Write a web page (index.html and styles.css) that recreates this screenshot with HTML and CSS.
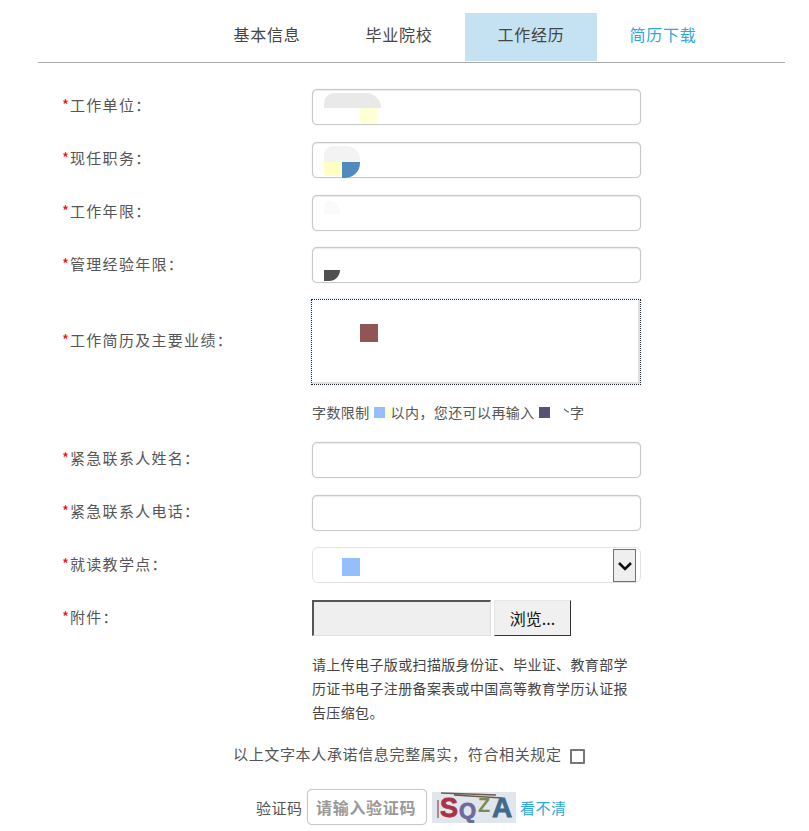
FILE: index.html
```html
<!DOCTYPE html>
<html lang="zh">
<head>
<meta charset="utf-8">
<title>工作经历</title>
<link rel="stylesheet" href="styles.css">
</head>
<body>
<nav class="tabs">
  <a class="tab">基本信息</a>
  <a class="tab">毕业院校</a>
  <a class="tab active">工作经历</a>
  <a class="tab link">简历下载</a>
</nav>
<form class="form">
  <div class="row">
    <label class="label"><i>*</i>工作单位：</label>
    <div class="field">
      <input class="input" type="text">
      <span class="mask m-a1"></span><span class="mask m-a2"></span>
    </div>
  </div>
  <div class="row">
    <label class="label"><i>*</i>现任职务：</label>
    <div class="field">
      <input class="input" type="text">
      <span class="mask m-b1"></span><span class="mask m-b2"></span><span class="mask m-b3"></span>
    </div>
  </div>
  <div class="row row-short">
    <label class="label"><i>*</i>工作年限：</label>
    <div class="field">
      <input class="input" type="text">
      <span class="mask m-c1"></span>
    </div>
  </div>
  <div class="row row-short">
    <label class="label label-low"><i>*</i>管理经验年限：</label>
    <div class="field">
      <input class="input" type="text">
      <span class="mask m-d1"></span>
    </div>
  </div>
  <div class="row row-area">
    <label class="label"><i>*</i>工作简历及主要业绩：</label>
    <div class="field">
      <div class="textarea"></div>
      <span class="mask m-e1"></span>
    </div>
  </div>
  <p class="hint">字数限制<span class="sw sw-blue"></span><span class="sw sw-pale"></span>以内，您还可以再输入<span class="sw sw-navy"></span><span class="sw-gap2"></span><span class="partial">个<span class="partial-mask"></span></span>字</p>
  <div class="row">
    <label class="label"><i>*</i>紧急联系人姓名：</label>
    <div class="field"><input class="input" type="text"></div>
  </div>
  <div class="row row-short">
    <label class="label"><i>*</i>紧急联系人电话：</label>
    <div class="field"><input class="input" type="text"></div>
  </div>
  <div class="row">
    <label class="label label-low"><i>*</i>就读教学点：</label>
    <div class="field">
      <div class="select">
        <span class="arrow">
          <svg width="16" height="10" viewBox="0 0 16 10"><path d="M2 2 L8 8 L14 2" fill="none" stroke="#111" stroke-width="2.6"/></svg>
        </span>
      </div>
      <span class="mask m-f1"></span>
    </div>
  </div>
  <div class="row row-file">
    <label class="label label-low"><i>*</i>附件：</label>
    <div class="file">
      <span class="file-path"></span>
      <button class="file-btn" type="button">浏览...</button>
    </div>
  </div>
  <p class="note">请上传电子版或扫描版身份证、毕业证、教育部学历证书电子注册备案表或中国高等教育学历认证报告压缩包。</p>
  <div class="agree">以上文字本人承诺信息完整属实，符合相关规定<span class="check"></span></div>
  <div class="captcha-row">
    <span class="captcha-label">验证码</span>
    <input class="captcha-input" type="text" placeholder="请输入验证码">
    <svg class="captcha" width="84" height="31" viewBox="0 0 84 31">
      <rect width="84" height="31" fill="#e0e6ec"/>
      <path d="M9 1 L64 3 M22 3 L70 6" stroke="#6d5a50" stroke-width="1.5"/>
      <path d="M6 8 V26" stroke="#7a2a3a" stroke-width="1"/>
      <text x="8" y="25" class="c-t c-s">S</text>
      <text x="27" y="26" class="c-t c-q">Q</text>
      <text x="46" y="20" class="c-t c-z">Z</text>
      <text x="60" y="25" class="c-t c-a">A</text>
    </svg>
    <a class="refresh">看不清</a>
  </div>
</form>
</body>
</html>
```
FILE: styles.css
```css
* { box-sizing: border-box; }
html, body { margin: 0; padding: 0; background: #fff; }
body {
  font-family: "Noto Sans CJK SC", "Liberation Sans", sans-serif;
  color: #555;
  width: 809px;
  height: 831px;
  overflow: hidden;
}
.tabs {
  display: flex;
  margin: 13px 24px 0 38px;
  padding-left: 163px;
  height: 50px;
  border-bottom: 1px solid #aaa;
}
.tab {
  width: 132px;
  height: 48px;
  line-height: 42px;
  text-align: center;
  font-size: 16px;
  letter-spacing: 0.8px;
  color: #444;
}
.tab.active { background: #c5e2f3; }
.tab.link { color: #2ea7e0; }

.form { padding-top: 26px; }
.row {
  display: flex;
  height: 53px;
  padding-left: 62px;
}
.row-short { height: 52px; }
.row-area { height: 104px; }
.row-file { height: 52px; }
.label {
  width: 250px;
  height: 36px;
  line-height: 31px;
  font-size: 15px;
  letter-spacing: 1.3px;
}
.label-low { line-height: 33px; }
.label i {
  display: inline-block;
  width: 8px;
  font-style: normal;
  color: #f00;
  letter-spacing: 0;
  font-size: 15px;
}
.row-area .label { height: 86px; line-height: 81px; }
.field { position: relative; width: 329px; }
.input {
  display: block;
  width: 329px;
  height: 36px;
  border: 1px solid #c8c8c8;
  border-radius: 5px;
  background: #fff;
  box-shadow: 0 0 1px #c8c8c8, inset 0 1px 1px rgba(0, 0, 0, 0.08);
  padding: 0 10px;
  outline: none;
}
.textarea {
  width: 330px;
  height: 86px;
  margin-left: -1px;
  border: 1px dotted #222;
  background: #fff;
  box-shadow: 0 0 4px #cfe6f5, inset -1px -1px 0 1px #e0e0e0;
}
.select {
  position: relative;
  width: 329px;
  height: 36px;
  border: 1px solid #e2e2e2;
  border-radius: 6px;
  background: #fff;
}
.arrow {
  position: absolute;
  right: 4px;
  top: 1px;
  width: 23px;
  height: 33px;
  display: flex;
  align-items: center;
  justify-content: center;
  border: 1px solid #707070;
  background: #efefef;
}
.mask { position: absolute; display: block; }
.m-a1 { left: 12px; top: 4px; width: 57px; height: 15px; background: #e9e9e9; border-radius: 10px 15px 0 0; }
.m-a2 { left: 48px; top: 19px; width: 18px; height: 16px; background: #ffffd6; border-radius: 0 0 5px 5px; }
.m-b1 { left: 12px; top: 4px; width: 36px; height: 16px; background: #f3f3f3; border-radius: 9px 14px 0 0; }
.m-b2 { left: 12px; top: 20px; width: 18px; height: 14px; background: #ffffc4; border-radius: 0 0 0 4px; }
.m-b3 { left: 30px; top: 20px; width: 18px; height: 16px; background: #4f8bbd; border-radius: 0 0 15px 0; }
.m-c1 { left: 12px; top: 6px; width: 16px; height: 13px; background: #fafafa; border-radius: 6px 10px 0 0; }
.m-d1 { left: 12px; top: 23px; width: 16px; height: 11px; background: #505050; border-radius: 0 0 14px 0; }
.m-e1 { left: 48px; top: 25px; width: 18px; height: 18px; background: #905555; }
.m-f1 { left: 30px; top: 11px; width: 18px; height: 18px; background: #93bfff; }

.hint {
  margin: -1px 0 0;
  padding-left: 312px;
  height: 40px;
  line-height: 20px;
  font-size: 14px;
  letter-spacing: 0.4px;
  display: flex;
  align-items: flex-start;
}
.sw { display: block; width: 11px; height: 11px; margin-top: 5px; }
.sw-blue { background: #93bfff; margin-left: 4px; }
.sw-pale { background: #ffffd6; width: 6px; }
.sw-navy { background: #565278; margin-left: 4px; }
.sw-gap2 { width: 6px; }
.partial { position: relative; }
.partial-mask {
  position: absolute;
  left: 0;
  top: 0;
  width: 8px;
  height: 20px;
  background: #fff;
}

.file { display: flex; width: 329px; height: 36px; }
.file-path {
  width: 179px;
  height: 36px;
  background: #efefef;
  border: 1px solid #e0e0e0;
  border-top: 2px solid #555;
  border-left: 2px solid #555;
}
.file-btn {
  margin-left: 3px;
  width: 77px;
  height: 36px;
  padding: 0;
  background: #f0f0f0;
  border: 1px solid #e6e6e6;
  border-right: 1px solid #333;
  border-bottom: 1px solid #333;
  font-family: "Noto Sans CJK SC", sans-serif;
  font-size: 16px;
  color: #111;
}
.note {
  margin: 0 0 0 312px;
  width: 330px;
  height: 89px;
  font-size: 14px;
  letter-spacing: 0.36px;
  line-height: 24px;
  color: #444;
}
.agree {
  display: flex;
  align-items: center;
  height: 26px;
  padding-left: 233px;
  font-size: 15px;
  letter-spacing: 0.65px;
  line-height: 22px;
}
.check {
  width: 15px;
  height: 15px;
  margin: 4px 0 0 8px;
  border: 2px solid #767676;
  background: #fff;
  border-radius: 1px;
}
.captcha-row {
  display: flex;
  align-items: center;
  height: 36px;
  margin-top: 22px;
  padding-left: 256px;
  font-size: 15px;
  letter-spacing: 0.5px;
}
.captcha-label { width: 51px; }
.captcha-input {
  width: 120px;
  height: 36px;
  border: 1px solid #c8c8c8;
  border-radius: 5px;
  box-shadow: 0 0 1px #c8c8c8;
  padding: 0 0 0 8px;
  font-family: "Noto Sans CJK SC", sans-serif;
  font-size: 16px;
  font-weight: 700;
  letter-spacing: 0.7px;
  background: #fff;
  outline: none;
}
.captcha-input::placeholder { color: #999; opacity: 1; }
.captcha { display: block; margin-left: 5px; }
.c-t { font-family: "Liberation Sans", sans-serif; font-weight: 700; stroke-width: 0.8px; }
.c-s { font-size: 27px; fill: #a83246; stroke: #a83246; }
.c-q { font-size: 22px; fill: #6e6a9c; stroke: #6e6a9c; }
.c-z { font-size: 20px; fill: #7a8a50; }
.c-a { font-size: 28px; fill: #3f6a8c; stroke: #3f6a8c; }
.refresh { margin-left: 4px; color: #2ea7e0; }
```
